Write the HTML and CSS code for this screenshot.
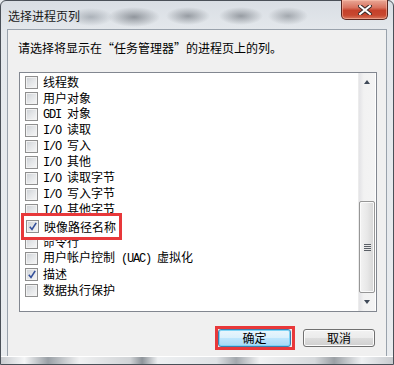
FILE: index.html
```html
<!DOCTYPE html>
<html lang="zh-CN">
<head>
<meta charset="utf-8">
<title>选择进程页列</title>
<link rel="stylesheet" href="styles.css">
</head>
<body>
<div class="window">
  <div class="titlebar">
    <span class="title">选择进程页列</span>
    <div class="close">
      <svg width="14" height="10" viewBox="0 0 14 10">
        <path d="M2 1 L12 9 M12 1 L2 9" stroke="#3a2a28" stroke-width="4" stroke-linecap="square"/>
        <path d="M2 1 L12 9 M12 1 L2 9" stroke="#ffffff" stroke-width="2" stroke-linecap="square"/>
      </svg>
    </div>
  </div>
  <div class="client">
    <p class="prompt">请选择将显示在“任务管理器”的进程页上的列。</p>
    <div class="listbox">
      <ul class="items">
        <li><span class="cb"></span><span class="lbl">线程数</span></li>
        <li><span class="cb"></span><span class="lbl">用户对象</span></li>
        <li><span class="cb"></span><span class="lbl"><span class="lat">GDI </span>对象</span></li>
        <li><span class="cb"></span><span class="lbl"><span class="lat">I/O </span>读取</span></li>
        <li><span class="cb"></span><span class="lbl"><span class="lat">I/O </span>写入</span></li>
        <li><span class="cb"></span><span class="lbl"><span class="lat">I/O </span>其他</span></li>
        <li><span class="cb"></span><span class="lbl"><span class="lat">I/O </span>读取字节</span></li>
        <li><span class="cb"></span><span class="lbl"><span class="lat">I/O </span>写入字节</span></li>
        <li><span class="cb"></span><span class="lbl"><span class="lat">I/O </span>其他字节</span></li>
        <li><span class="cb checked"></span><span class="lbl">映像路径名称</span></li>
        <li><span class="cb"></span><span class="lbl">命令行</span></li>
        <li><span class="cb"></span><span class="lbl">用户帐户控制<span class="lat"> (UAC) </span>虚拟化</span></li>
        <li><span class="cb checked"></span><span class="lbl">描述</span></li>
        <li><span class="cb"></span><span class="lbl">数据执行保护</span></li>
      </ul>
      <div class="scrollbar">
        <div class="arrow up"></div>
        <div class="track">
          <div class="thumb"><span class="grip"></span></div>
        </div>
        <div class="arrow down"></div>
      </div>
      <div class="highlight"><span class="cb checked"></span><span class="lbl">映像路径名称</span></div>
    </div>
    <div class="buttons">
      <div class="mark"><button class="btn default">确定</button></div>
      <button class="btn">取消</button>
    </div>
  </div>
</div>
</body>
</html>
```
FILE: styles.css
```css
* { box-sizing: border-box; }
html, body { margin: 0; padding: 0; }
body {
  width: 394px;
  height: 365px;
  overflow: hidden;
  background: #e6eaee;
  font-family: "Noto Sans CJK SC", "Liberation Sans", sans-serif;
  font-size: 12px;
  color: #000;
}
.window {
  width: 394px;
  height: 365px;
  border: 1px solid #4a5058;
  border-radius: 6px 6px 0 0;
  padding: 0 6px 7px 6px;
  display: flex;
  flex-direction: column;
  background:
    radial-gradient(ellipse 22px 9px at 90px 16px, rgba(110,118,128,0.45), rgba(110,118,128,0) 100%),
    radial-gradient(ellipse 26px 10px at 133px 16px, rgba(80,86,94,0.55), rgba(80,86,94,0) 100%),
    radial-gradient(ellipse 22px 9px at 187px 15px, rgba(80,86,94,0.5), rgba(80,86,94,0) 100%),
    radial-gradient(ellipse 22px 9px at 240px 15px, rgba(80,86,94,0.5), rgba(80,86,94,0) 100%),
    radial-gradient(ellipse 20px 9px at 287px 15px, rgba(90,96,104,0.45), rgba(90,96,104,0) 100%),
    linear-gradient(to bottom, #d9dee4 0px, #e4e8ec 30px, #e9ecef 100%);
  position: relative;
}
.window::after {
  content: "";
  position: absolute;
  left: 0; right: 0; bottom: 0;
  height: 7px;
  background: linear-gradient(to right, #c9ccd0, #f4f5f6 6%, #9aa0a6 12%, #f0f1f2 20%, #d0d3d6 33%, #8e949a 36%, #eef0f2 40%, #dfe2e5 55%, #a3a8ad 60%, #f1f2f3 66%, #d6d9dc 80%, #9ba0a5 85%, #eef0f2 92%, #c8cbcf);
  border-top: 1px solid #ffffff;
}
.titlebar {
  height: 28px;
  display: flex;
  justify-content: space-between;
  align-items: flex-start;
}
.title {
  margin: 8px 0 0 1px;
  line-height: 14px;
  color: #1a1a1a;
}
.close {
  width: 47px;
  height: 20px;
  margin: -1px -1px 0 0;
  border: 1px solid #5a2620;
  border-top: none;
  border-radius: 0 0 5px 5px;
  background: linear-gradient(to bottom, #e9a897 0%, #d9735f 40%, #c5412b 55%, #c8472f 80%, #d8785f 100%);
  box-shadow: inset 0 0 0 1px rgba(255,200,180,0.5);
  display: flex;
  align-items: center;
  justify-content: center;
}
.client {
  flex: 1;
  border: 1px solid #99a2ac;
  background: #f0f0f0;
  display: flex;
  flex-direction: column;
}
.prompt {
  margin: 10px 0 0 10px;
  line-height: 16px;
}
.listbox {
  position: relative;
  margin: 16px 9px 0 11px;
  height: 240px;
  border: 1px solid #828790;
  background: #fff;
  display: flex;
}
.items {
  list-style: none;
  margin: 0;
  padding: 1px 0 0 5px;
  flex: 1;
}
.items li {
  height: 16px;
  display: flex;
  align-items: center;
  line-height: 16px;
}
.lbl {
  white-space: pre;
}
.lat {
  font-family: "Liberation Mono", monospace;
  font-size: 12px;
  letter-spacing: -1.2px;
}
.cb {
  width: 13px;
  height: 13px;
  flex: none;
  margin-right: 5px;
  border: 1px solid #8f8f8f;
  background: linear-gradient(135deg, #cbcfd4 0%, #e4e6e8 50%, #f7f7f7 100%);
  box-shadow: inset 0 0 0 1px #f2f2f2;
  position: relative;
}
.cb.checked::after {
  content: "";
  position: absolute;
  left: 2px; top: 1px;
  width: 8px; height: 9px;
  background: no-repeat center/8px 9px url("data:image/svg+xml;utf8,<svg xmlns='http://www.w3.org/2000/svg' width='8' height='9' viewBox='0 0 8 9'><path d='M0.8 4.8 L3 7.5 L7.2 0.8' fill='none' stroke='%23334f9a' stroke-width='1.6'/></svg>");
}
.scrollbar {
  width: 17px;
  margin-right: 1px;
  display: flex;
  flex-direction: column;
  background: linear-gradient(to right, #e3e3e6, #f2f2f2 30%, #f4f4f4);
  border-left: 1px solid #ececec;
}
.arrow {
  height: 17px;
  position: relative;
}
.arrow::after {
  content: "";
  position: absolute;
  left: 5px;
  width: 0; height: 0;
  border-left: 3.5px solid transparent;
  border-right: 3.5px solid transparent;
}
.arrow.up::after { top: 7px; border-bottom: 4px solid #404a58; }
.arrow.down::after { top: 6px; border-top: 4px solid #404a58; }
.track {
  flex: 1;
  display: flex;
  flex-direction: column;
  justify-content: flex-end;
}
.thumb {
  height: 92px;
  margin: 0 0 1px 0;
  border: 1px solid #969696;
  border-radius: 2px;
  background: linear-gradient(to right, #f3f3f3, #e8e8e8 50%, #d6d6d6);
  box-shadow: inset 0 0 0 1px #fafafa;
  display: flex;
  align-items: center;
  justify-content: center;
}
.grip {
  width: 7px;
  height: 7px;
  background: repeating-linear-gradient(to bottom, #5a5f66 0, #5a5f66 1px, #e8e8e8 1px, #e8e8e8 2px);
}
.highlight {
  position: absolute;
  left: 1px;
  top: 140px;
  width: 101px;
  height: 27px;
  border: 3px solid #e8383a;
  background: #fff;
  display: flex;
  align-items: center;
  padding-left: 2px;
  line-height: 16px;
}
.buttons {
  margin: 14px 11px 0 0;
  display: flex;
  justify-content: flex-end;
  align-items: center;
  gap: 8px;
}
.mark {
  border: 3px solid #e8383a;
  padding: 0 1px 0 0;
  display: flex;
}
.btn {
  width: 72px;
  height: 18px;
  padding: 0;
  font-family: "Noto Sans CJK SC", sans-serif;
  font-size: 12px;
  line-height: 14px;
  color: #000;
  border: 1px solid #707070;
  border-radius: 3px;
  background: linear-gradient(to bottom, #f2f2f2 0%, #ebebeb 50%, #dddddd 51%, #cfcfcf 100%);
  box-shadow: inset 0 0 0 1px #fcfcfc;
}
.btn.default {
  width: 73px;
  border-color: #3c7fb1;
  background: linear-gradient(to bottom, #eaf6fd 0%, #d9f0fc 50%, #bee6fd 51%, #a7d9f5 100%);
  box-shadow: inset 0 0 0 1px #7fd4f5;
}
```
